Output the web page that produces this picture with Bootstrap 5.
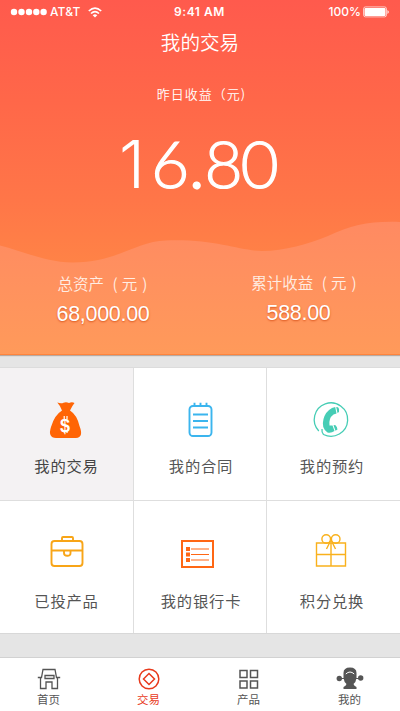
<!DOCTYPE html>
<html lang="zh-CN">
<head>
<meta charset="utf-8">
<meta name="viewport" content="width=device-width, initial-scale=1">
<title>我的交易</title>
<link href="https://cdn.jsdelivr.net/npm/bootstrap@5.3.0/dist/css/bootstrap.min.css" rel="stylesheet">
<style>
body{font-family:"Liberation Sans","Noto Sans CJK SC",sans-serif;background:#e5e5e5;width:400px;height:711px;overflow:hidden}
svg{display:block}
.hero{height:355px;background:linear-gradient(#ff5a4d 0,#ff6749 100px,#ff7648 200px,#ff8446 270px,#ff8b47 355px);box-shadow:0 1px 1px #b9a9a0}
.wave{left:0;top:220px}
.status-bar{height:24px;font:500 12px/24px Inter,sans-serif;padding:0 11px 0 10px}
.status-bar .carrier{margin:0 7px 0 2px;letter-spacing:.15px}
.status-bar .charge{margin-right:2px}
.status-bar .clock{font-weight:600;letter-spacing:.55px}
.title{font:350 19.6px/28px "Noto Sans CJK SC",sans-serif;margin-top:4px}
.sub{font:350 13px/20px "Noto Sans CJK SC",sans-serif;margin-top:28px;letter-spacing:1px;padding-left:3px}
.amount{margin-top:10px}
.stats{margin-top:50px}
.stat-name{font:350 15.5px/22px "Noto Sans CJK SC",sans-serif;color:#ffeee4}
.stat-name i{font-style:normal;padding:0 4px 0 5px}
.stat-sum{font-size:21.5px;line-height:26px;letter-spacing:-.3px;text-shadow:0 1px 2px #d9541c;margin-top:7px}
.total{padding-left:6px}
.total .stat-name{padding-left:3px}
.earned{margin-top:-1px}
.earned .stat-name{padding-left:12px}
.earned .stat-sum{padding-right:3px}
.tiles{margin-top:12px;height:267px;display:grid;grid-template-columns:133px 132px 133px;grid-template-rows:132px 132px;background:#dedede;border-top:1px solid #dcdcdc;border-bottom:1px solid #d8d8d8;gap:1px}
.tile{background:#fff;color:#555;font:400 15.3px/22px "Noto Sans CJK SC",sans-serif;letter-spacing:.8px}
.tile:nth-child(3n+2){padding-left:2px}
.tile:nth-child(3n){padding-right:3px}
.tile.current{background:#f4f2f3;color:#444}
.tile svg{margin-top:31px;margin-bottom:11px}
.tile:nth-child(n+4) svg{margin-top:33px}
.tabs{margin-top:23px;height:54px;background:#fff;border-top:1px solid #d2d2d2}
.tab{width:100px;font:400 11.5px/16px "Noto Sans CJK SC",sans-serif;color:#555;padding-right:3px}
.tab:last-child{padding-right:1px}
.tab.current{color:#e83a1c}
.tab svg{margin-top:8px}
</style>
</head>
<body>
<header class="hero position-relative text-white">
  <svg class="wave position-absolute" width="400" height="135" viewBox="0 0 400 135">
    <defs><linearGradient id="w" x1="0" y1="0" x2="0" y2="1"><stop offset="0" stop-color="#ff8a62"/><stop offset="1" stop-color="#ff9a5a"/></linearGradient></defs>
    <path d="M0 25.500C22 31 45 42 72 42.500C116 43 138 20.500 166 20.500C216 19 237 30.500 262 31C285 31 308 24 328 16C352 5 370 1 400 2V135H0z" fill="url(#w)"/>
    <path d="M0 134.500H400" stroke="#ff843c"/>
  </svg>
  <div class="position-relative">
    <div class="status-bar row g-0">
      <div class="col-4 d-flex align-items-center">
        <svg width="38" height="8" fill="#fff"><circle cx="4" cy="4" r="3.200"/><circle cx="11.500" cy="4" r="3.200"/><circle cx="19" cy="4" r="3.200"/><circle cx="26.300" cy="4" r="3.200"/><circle cx="33.600" cy="4" r="3.200"/></svg>
        <span class="carrier">AT&amp;T</span>
        <svg width="14" height="11" viewBox="0 0 14 11" fill="none" stroke="#fff" stroke-width="1.700"><path d="M.8 4Q7-1.800 13.200 4M3 6.500Q7 2.800 11 6.500"/><path d="M4.700 8.200Q7 6.200 9.300 8.200L7 10.600z" fill="#fff" stroke="none"/></svg>
      </div>
      <div class="col-4 text-center clock">9:41 AM</div>
      <div class="col-4 d-flex align-items-center justify-content-end">
        <span class="charge">100%</span>
        <svg width="26" height="12" viewBox="0 0 26 12"><rect x=".5" y=".9" width="23" height="10" rx="2" fill="none" stroke="#fff" stroke-opacity=".65"/><rect x="1.500" y="2" width="21" height="8" rx="1" fill="#fff"/><path d="M24.500 4Q27 6 24.500 8z" fill="#fff"/></svg>
      </div>
    </div>
    <div class="title text-center">我的交易</div>
    <div class="sub text-center">昨日收益（元)</div>
    <svg class="amount" width="400" height="108" viewBox="0 0 400 108" fill="#fff" stroke="#fff" stroke-width="1.200" font-family="Lato" font-weight="300" font-size="66"><text y="74"><tspan x="119" font-family="Inter" stroke="none">1</tspan><tspan x="151">6</tspan><tspan x="189" stroke-width="2">.</tspan><tspan x="204.500">8</tspan><tspan x="240.500">0</tspan></text></svg>
    <div class="stats row g-0 text-center">
      <div class="col-6 total"><div class="stat-name">总资产<i>&nbsp;(</i>元<i>)</i></div><div class="stat-sum">68,000.00</div></div>
      <div class="col-6 earned"><div class="stat-name">累计收益<i>&nbsp;(</i>元<i>)</i></div><div class="stat-sum">588.00</div></div>
    </div>
  </div>
</header>
<main class="tiles">
  <div class="tile current d-flex flex-column align-items-center">
    <svg width="44" height="44" viewBox="0 0 44 44"><path d="M12.300 3.500Q16 5 18.500 3.800Q21 2.500 24 4Q27 2.500 29.500 4Q27 7 25 11.500Q32 16 34.500 27Q39 38.500 31 39H11Q2.500 38.500 6 28Q9.500 16 17 11.500Q15.500 7 12.300 3.500z" fill="#ff6505"/><text x="20.500" y="32.500" text-anchor="middle" fill="#fff" font-family="Liberation Sans" font-weight="700" font-size="18">$</text><path d="M19.200 17v3M22 17v3M19.200 31v3M22 31v3" stroke="#fff" stroke-width="1.200"/></svg>我的交易
  </div>
  <div class="tile d-flex flex-column align-items-center">
    <svg width="44" height="44" viewBox="0 0 44 44" fill="none" stroke="#3bb5ee" stroke-width="1.900"><rect x="10.500" y="7" width="22" height="30" rx="3.500"/><path d="M15.500 3.800v3M21.500 3.800v3M27.500 3.800v3M14 15.500h15M14 22h15M14 28.500h15"/></svg>我的合同
  </div>
  <div class="tile d-flex flex-column align-items-center">
    <svg width="44" height="44" viewBox="0 0 44 44"><path d="M8.800 32A16.700 16.700 0 1 1 13.500 35.500Q11.500 33.500 12 30" fill="none" stroke="#46cdb5" stroke-width="1.300"/><path d="M22 9L25.200 8L26.500 14.500L23.500 15.500Q18.500 19 19.500 26.500L22.500 26.500L24.500 32Q21 34.500 17.500 33.500Q11 29 13.500 20Q15.500 12.500 22 9zM26.200 8L28 8.200Q30 10 29 13L27.500 14zM23.500 26.200L25.200 26Q27.500 28 27.500 30.500L25.500 31.800z" fill="#46cdb5"/></svg>我的预约
  </div>
  <div class="tile d-flex flex-column align-items-center">
    <svg width="44" height="44" viewBox="0 0 44 44" fill="none" stroke="#f8a517" stroke-width="1.900"><rect x="6.500" y="7" width="31" height="25" rx="3"/><path d="M17 7V4Q17 3 18 3H27Q28 3 28 4V7M7 16.500H37M19 16.500V19Q19 21.800 22.300 21.800T25.500 19V16.500"/></svg>已投产品
  </div>
  <div class="tile d-flex flex-column align-items-center">
    <svg width="44" height="44" viewBox="0 0 44 44" fill="none" stroke="#ff6714"><rect x="3" y="7" width="31" height="26" stroke-width="2"/><path d="M12 15h18M12 20.500h18M12 26h18" stroke-width="1"/><path d="M7 15h4M7 20.500h4M7 26h4" stroke-width="3.800"/></svg>我的银行卡
  </div>
  <div class="tile d-flex flex-column align-items-center">
    <svg width="44" height="44" viewBox="0 0 44 44" fill="none" stroke="#f9b11c" stroke-width="1.400"><path d="M6.500 9H35.500V32H6.500zM6.500 20.500H35.500M21 9V32"/><circle cx="16.200" cy="5" r="4.300"/><circle cx="25.700" cy="5" r="4.300"/><path d="M20.500 7L16.500 15M21.500 7L25.500 15"/></svg>积分兑换
  </div>
</main>
<nav class="tabs d-flex">
  <div class="tab d-flex flex-column align-items-center">
    <svg width="24" height="25" viewBox="0 0 24 25" fill="none" stroke="#555" stroke-width="1.300"><path d="M3.500 12V22.500H9V16H15V22.500H20.500V12M.8 11.500H4.500L6 3.500H18L19.500 11.500H23.200M8 9.500H17V12.500H8z"/></svg>首页
  </div>
  <div class="tab current d-flex flex-column align-items-center">
    <svg width="24" height="25" viewBox="0 0 24 25" fill="none" stroke="#e83a1c" stroke-width="1.500"><circle cx="12" cy="13" r="9.800"/><path d="M12 7.500L17.500 13L12 18.500L6.500 13z"/></svg>交易
  </div>
  <div class="tab d-flex flex-column align-items-center">
    <svg width="24" height="25" viewBox="0 0 24 25" fill="none" stroke="#555" stroke-width="1.500"><path d="M3 4.500h7v7H3zM13.500 4.500h7v7h-7zM3 15h7v7H3zM13.500 15h7v7h-7z"/></svg>产品
  </div>
  <div class="tab d-flex flex-column align-items-center">
    <svg width="28" height="25" viewBox="0 0 28 25" fill="#555"><circle cx="3.300" cy="12.500" r="2.700"/><circle cx="24.700" cy="12" r="2.700"/><path d="M3 12H25V13H3zM7.500 12V7Q7.500 1.500 14 1.500T20.500 7V12Q20 16 17.500 18Q18 20 20.500 21V23H7.500V21Q10 20 10.500 18Q8 16 7.500 12z"/><path d="M9.800 8Q14 4 18.200 8" fill="none" stroke="#fff" stroke-width="1"/></svg>我的
  </div>
</nav>
<script src="https://cdn.jsdelivr.net/npm/bootstrap@5.3.0/dist/js/bootstrap.bundle.min.js"></script>
</body>
</html>
